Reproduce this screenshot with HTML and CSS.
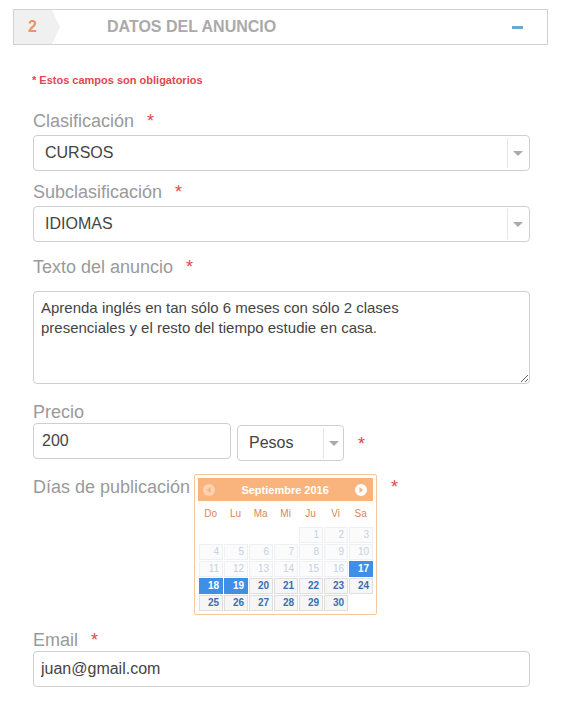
FILE: index.html
```html
<!DOCTYPE html>
<html lang="es">
<head>
    <meta charset="UTF-8">
    <meta name="viewport" content="width=device-width, initial-scale=1.0">
    <title>Datos del anuncio</title>
    <link rel="stylesheet" href="styles.css">
</head>
<body>
    <div class="panel-head">
        <span class="step">2</span>
        <span class="panel-title">DATOS DEL ANUNCIO</span>
        <span class="toggle"></span>
    </div>

    <div class="panel-body">
        <p class="required-note">* Estos campos son obligatorios</p>

        <div class="field field-first">
            <label class="field-label">Clasificación <span class="req">*</span></label>
            <div class="select">
                <span class="select-value">CURSOS</span>
                <span class="select-arrow"></span>
            </div>
        </div>

        <div class="field field-sub">
            <label class="field-label">Subclasificación <span class="req">*</span></label>
            <div class="select">
                <span class="select-value">IDIOMAS</span>
                <span class="select-arrow"></span>
            </div>
        </div>

        <div class="field field-text">
            <label class="field-label">Texto del anuncio <span class="req">*</span></label>
            <textarea class="textarea">Aprenda inglés en tan sólo 6 meses con sólo 2 clases
presenciales y el resto del tiempo estudie en casa.</textarea>
        </div>

        <div class="field field-price">
            <label class="field-label tight">Precio</label>
            <div class="price-row">
                <input class="input price-input" type="text" value="200">
                <div class="select currency">
                    <span class="select-value">Pesos</span>
                    <span class="select-arrow"></span>
                </div>
                <span class="req req-side">*</span>
            </div>
        </div>

        <div class="field field-days">
            <label class="field-label days-label">Días de publicación</label>
            <div class="datepicker">
                <div class="dp-head">
                    <svg class="dp-nav dp-prev" width="12" height="12" viewBox="0 0 12 12">
                        <circle cx="6" cy="6" r="6" fill="#fff"/>
                        <path d="M7.5 3 L3.8 6 L7.5 9 Z" fill="#f8b47c"/>
                    </svg>
                    <span class="dp-title">Septiembre 2016</span>
                    <svg class="dp-nav dp-next" width="12" height="12" viewBox="0 0 12 12">
                        <circle cx="6" cy="6" r="6" fill="#fff"/>
                        <path d="M4.5 3 L8.2 6 L4.5 9 Z" fill="#f8b47c"/>
                    </svg>
                </div>
                <table class="dp-table">
                    <thead>
                        <tr><th>Do</th><th>Lu</th><th>Ma</th><th>Mi</th><th>Ju</th><th>Vi</th><th>Sa</th></tr>
                    </thead>
                    <tbody id="dp-days"></tbody>
                </table>
            </div>
            <span class="req req-side days-req">*</span>
        </div>

        <div class="field field-email">
            <label class="field-label tight">Email <span class="req">*</span></label>
            <input class="input" type="text" value="juan@gmail.com">
        </div>
    </div>

    <script>
        // septiembre 2016 empieza en jueves; del 1 al 16 no se pueden elegir
        const body = document.getElementById('dp-days');
        const selected = [17, 18, 19];
        let day = 1 - 4;
        for (let r = 0; r < 5; r++) {
            const tr = document.createElement('tr');
            for (let c = 0; c < 7; c++, day++) {
                const td = document.createElement('td');
                if (day >= 1 && day <= 30) {
                    const a = document.createElement('span');
                    a.textContent = day;
                    a.className = 'dp-day';
                    if (day < 17) a.classList.add('disabled');
                    if (selected.includes(day)) a.classList.add('active');
                    td.appendChild(a);
                }
                tr.appendChild(td);
            }
            body.appendChild(tr);
        }
    </script>
</body>
</html>
```

FILE: styles.css
```css
body {
    margin: 0;
    font-family: 'Liberation Sans', Arial, sans-serif;
    background: #fff;
    color: #444;
    width: 564px;
}

.panel-head {
    margin: 9px 16px 0 13px;
    height: 34px;
    border: 1px solid #d2d2d2;
    display: flex;
    align-items: center;
    position: relative;
}
.step {
    position: relative;
    width: 38px;
    height: 34px;
    background-color: #f0f0f0;
    color: #e9946a;
    font-weight: bold;
    font-size: 16px;
    line-height: 34px;
    padding-left: 14px;
    box-sizing: border-box;
}
.step::after {
    content: '';
    position: absolute;
    top: 0;
    left: 38px;
    border-left: 8px solid #f0f0f0;
    border-top: 17px solid transparent;
    border-bottom: 17px solid transparent;
}
.panel-title {
    margin-left: 55px;
    font-size: 16px;
    font-weight: bold;
    color: #aaa;
}
.toggle {
    margin-left: auto;
    margin-right: 24px;
    width: 11px;
    height: 3px;
    background-color: #6aa8d2;
}

.panel-body {
    padding: 0 34px 0 33px;
}
.required-note {
    margin: 28px 0 0 -1px;
    font-size: 11px;
    line-height: 14px;
    color: #e2474c;
    font-weight: bold;
}

.field-first { margin-top: 24px; }
.field-sub { margin-top: 11px; }
.field-text { margin-top: 15px; }
.field-price { margin-top: 18px; }
.field-days { margin-top: 13px; }
.field-email { margin-top: 15px; }

.field-label {
    display: block;
    font-size: 18px;
    line-height: 20px;
    color: #9a9a9a;
    margin-bottom: 4px;
}
.field-label.tight {
    margin-bottom: 1px;
}
.req {
    color: #e2474c;
    margin-left: 8px;
}

.select {
    height: 34px;
    border: 1px solid #cfcfcf;
    border-radius: 4px;
    display: flex;
    align-items: center;
    padding-left: 11px;
    font-size: 16px;
    color: #444;
    position: relative;
}
.select-arrow {
    margin-left: auto;
    width: 21px;
    height: 30px;
    border-left: 1px solid #e6e6e6;
    position: relative;
}
.select-arrow::after {
    content: '';
    position: absolute;
    left: 5px;
    top: 13px;
    border-top: 5px solid #aaa;
    border-left: 5px solid transparent;
    border-right: 5px solid transparent;
}

.textarea {
    display: block;
    margin-top: 14px;
    width: 100%;
    height: 93px;
    box-sizing: border-box;
    border: 1px solid #cfcfcf;
    border-radius: 4px;
    padding: 6px 7px;
    font-family: 'Liberation Sans', Arial, sans-serif;
    font-size: 15px;
    line-height: 20px;
    color: #444;
    resize: vertical;
}

.input {
    display: block;
    width: 100%;
    height: 36px;
    box-sizing: border-box;
    border: 1px solid #cfcfcf;
    border-radius: 4px;
    padding: 0 7px;
    font-family: 'Liberation Sans', Arial, sans-serif;
    font-size: 16px;
    color: #444;
}

.price-row {
    display: flex;
    align-items: flex-start;
}
.price-input {
    width: 198px;
    padding-left: 8px;
}
.currency {
    width: 107px;
    box-sizing: border-box;
    height: 36px;
    margin: 2px 0 0 6px;
}
.currency .select-arrow {
    width: 19px;
}
.req-side {
    margin: 11px 0 0 14px;
    font-size: 18px;
    line-height: 20px;
}

.field-days {
    display: flex;
    align-items: flex-start;
}
.days-label {
    padding-top: 3px;
    margin: 0 4px 0 0;
}
.days-req {
    margin: 3px 0 0 14px;
}

.datepicker {
    border: 1px solid #f2c99e;
    padding: 3px;
    width: 175px;
    border-radius: 2px;
}
.dp-head {
    height: 23px;
    background-color: #f8b47c;
    display: flex;
    align-items: center;
    justify-content: space-between;
    padding: 0 6px 0 5px;
}
.dp-title {
    color: #fff;
    font-weight: bold;
    font-size: 11px;
}
.dp-prev {
    opacity: 0.4;
}

.dp-table {
    border-collapse: collapse;
    table-layout: fixed;
    width: 175px;
}
.dp-table th {
    height: 25px;
    padding: 0;
    font-size: 10px;
    font-weight: normal;
    color: #d8865c;
}
.dp-table td {
    padding: 1px 0 0 1px;
    height: 16px;
    width: 25px;
}
.dp-day {
    display: block;
    height: 14px;
    line-height: 14px;
    border: 1px solid #dedede;
    background-color: #f6f6f6;
    text-align: right;
    padding-right: 3px;
    font-size: 10px;
    font-weight: bold;
    color: #3b6eae;
}
.dp-day.disabled {
    border-color: #eef0f3;
    background-color: #fbfbfc;
    color: #c3d1e2;
    font-weight: normal;
}
.dp-day.active {
    background-color: #3f8fe6;
    border-color: #3f8fe6;
    color: #fff;
}
```
